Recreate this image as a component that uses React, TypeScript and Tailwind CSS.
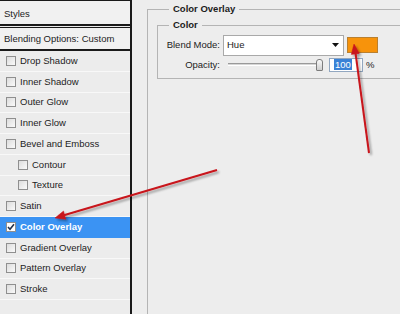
import React from 'react';

interface StyleItem {
  name: string;
  indent?: boolean;
  checked?: boolean;
}

const items: StyleItem[] = [
  { name: 'Drop Shadow' },
  { name: 'Inner Shadow' },
  { name: 'Outer Glow' },
  { name: 'Inner Glow' },
  { name: 'Bevel and Emboss' },
  { name: 'Contour', indent: true },
  { name: 'Texture', indent: true },
  { name: 'Satin' },
  { name: 'Color Overlay', checked: true },
  { name: 'Gradient Overlay' },
  { name: 'Pattern Overlay' },
  { name: 'Stroke' },
];

const Checkbox: React.FC<{ checked?: boolean }> = ({ checked }) => (
  <span className={checked
    ? 'w-[10px] h-[10px] shrink-0 border border-[#8f8f8f] bg-white flex items-center justify-center'
    : 'w-[10px] h-[10px] shrink-0 border border-[#8f8f8f] bg-gradient-to-br from-[#dcdcdc] to-[#fafafa] flex items-center justify-center'}>
    {checked && (
      <svg width="8" height="8" viewBox="0 0 8 8">
        <path d="M1 4 L3 6.2 L7 1.2" stroke="#22304a" strokeWidth="1.6" fill="none" />
      </svg>
    )}
  </span>
);

const App: React.FC = () => {
  return (
    <div className="relative w-[400px] h-[314px] overflow-hidden flex bg-[#ededed] text-[9.5px] text-[#1c1c1c] font-['Liberation_Sans',Arial,sans-serif]">
      {/* Styles list */}
      <div className="w-[132px] shrink-0 flex flex-col border-r-2 border-[#1a1a1a] bg-[#ececec]">
        <div className="h-[26px] shrink-0 flex items-center pl-[4px] pt-[4px] bg-[#f1f1f1] border-t border-b-2 border-[#1a1a1a]">Styles</div>
        <div className="h-[24px] shrink-0 flex items-center pl-[4px] pt-px bg-[#f1f1f1] border-t border-b-2 border-[#1a1a1a] mt-px">Blending Options: Custom</div>
        {items.map(item => (
          <div
            key={item.name}
            className={
              item.checked
                ? 'h-[20.75px] shrink-0 flex items-center gap-[4px] pl-[6px] bg-[#3b93f3] text-white font-bold'
                : item.indent
                  ? 'h-[20.75px] shrink-0 flex items-center gap-[4px] pl-[18px] border-b border-[#f8f8f8]'
                  : 'h-[20.75px] shrink-0 flex items-center gap-[4px] pl-[6px] border-b border-[#f8f8f8]'
            }
          >
            <Checkbox checked={item.checked} />
            <span>{item.name}</span>
          </div>
        ))}
      </div>

      {/* Color Overlay settings */}
      <div className="flex-1 pl-[15px] pt-[2px]">
        <fieldset className="w-[300px] h-[340px] border border-[#b4b4b4] pl-[9px] pt-[2px]">
          <legend className="ml-[12px] px-[4px] font-bold">Color Overlay</legend>
          <fieldset className="border border-[#b4b4b4] pb-[6px] pt-[2px]">
            <legend className="ml-[11px] px-[4px] font-bold">Color</legend>
            <div className="flex items-center">
              <span className="w-[62px] text-right">Blend Mode:</span>
              <div className="ml-[3px] w-[121px] h-[21px] bg-white border border-[#a9a9a9] flex items-center justify-between pl-[3px] pr-[4px]">
                <span>Hue</span>
                <svg width="7" height="4" viewBox="0 0 7 4">
                  <path d="M0 0 H7 L3.5 4 Z" fill="#111" />
                </svg>
              </div>
              <div className="ml-[3px] w-[31px] h-[16px] bg-[#f7930b] border border-[#b98030]" />
            </div>
            <div className="flex items-center mt-[2px]">
              <span className="w-[62px] text-right">Opacity:</span>
              <div className="ml-[3px] w-[103px] h-[14px] flex items-center pl-[5px]">
                <div className="w-[88px] h-[3px] border-t border-[#9a9a9a] border-b border-b-white bg-[#d6d6d6]" />
                <div className="w-[7px] h-[12px] border border-[#7c7c7c] rounded-t-[3px] rounded-b-[1px] bg-gradient-to-b from-[#fafafa] to-[#cfcfcf]" />
              </div>
              <div className="ml-[3px] w-[34px] h-[14px] bg-white border border-[#92a7c0] flex items-center pl-[4px]">
                <span className="bg-[#3a82d6] text-white px-px leading-[11px]">100</span>
              </div>
              <span className="ml-[3px]">%</span>
            </div>
          </fieldset>
        </fieldset>
      </div>

      {/* Red arrows drawn over the dialog */}
      <svg className="absolute inset-0 pointer-events-none" width="400" height="314" viewBox="0 0 400 314">
        <defs>
          <filter id="sh" x="-20%" y="-20%" width="140%" height="140%">
            <feDropShadow dx="2" dy="2" stdDeviation="1.2" floodColor="#000" floodOpacity="0.35" />
          </filter>
        </defs>
        <g filter="url(#sh)" fill="#c8141b" stroke="#c8141b">
          <line x1="217" y1="170" x2="63" y2="215.5" strokeWidth="2" />
          <polygon points="55,218 65.7,219.2 63.5,211" strokeWidth="0.5" />
          <line x1="369" y1="153" x2="355.5" y2="53" strokeWidth="2" />
          <polygon points="354,44 359.3,53.4 351.3,54.4" strokeWidth="0.5" />
        </g>
      </svg>
    </div>
  );
};

export default App;
